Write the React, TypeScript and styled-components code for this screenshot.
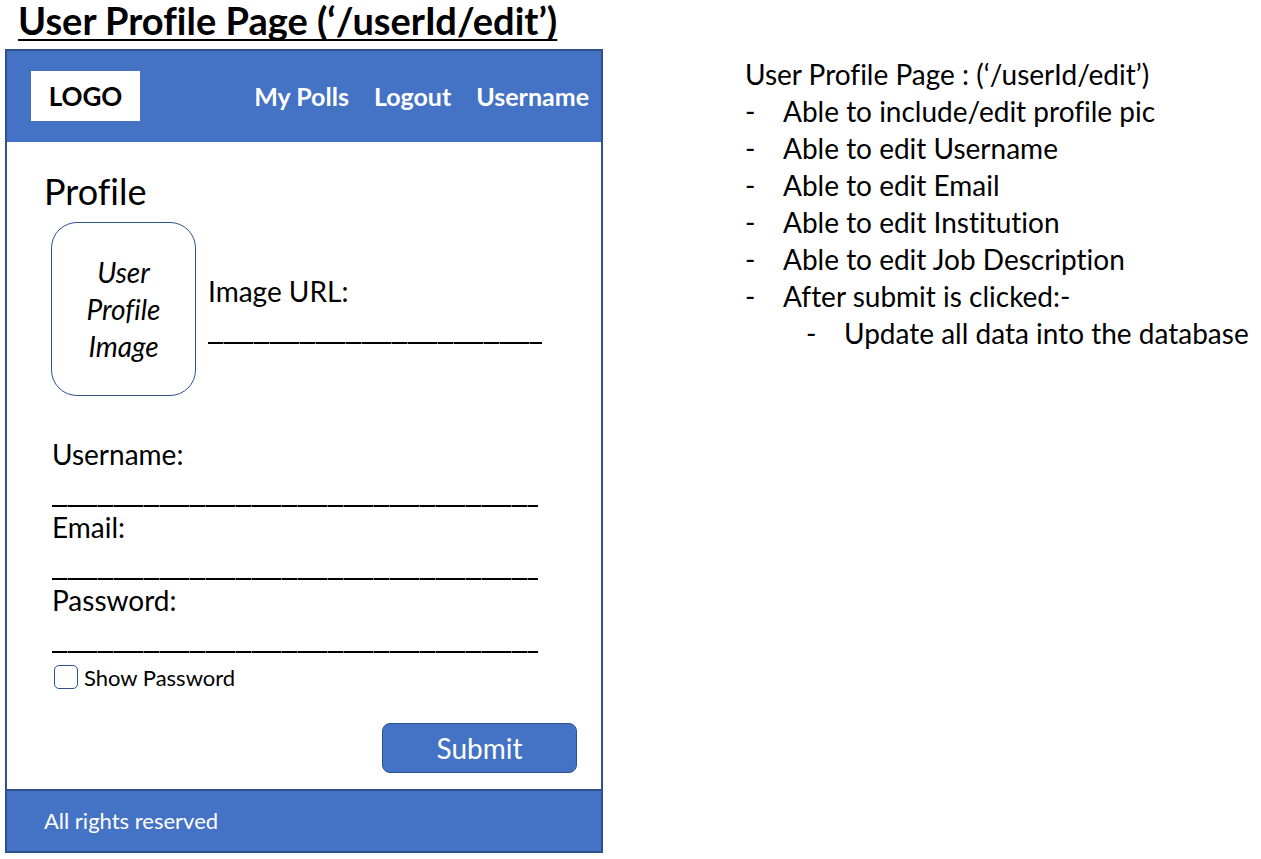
import React, { useState } from "react";
import styled, { createGlobalStyle } from "styled-components";

const blue = "#4472c4";
const navy = "#2f528f";

const GlobalStyle = createGlobalStyle`
  *, *::before, *::after { box-sizing: border-box; }
  body {
    margin: 0;
    background: #fff;
    color: #000;
    font-family: Lato, "Liberation Sans", sans-serif;
    font-size: 28px;
    line-height: 37px;
    font-variant-ligatures: none;
  }
  button, input { font: inherit; color: inherit; }
`;

const Page = styled.main`
  padding: 0 5px 6px;
`;

const Title = styled.h1`
  margin: 0;
  padding: 0 13px 9px;
  font-size: 38px;
  line-height: 40px;
  font-weight: 700;
  white-space: nowrap;
  text-decoration: underline 2px;
  text-decoration-skip-ink: none;
  text-underline-offset: 4px;
`;

const Columns = styled.div`
  display: grid;
  grid-template-columns: minmax(0, 598fr) minmax(0, 511fr);
  column-gap: 142px;
  align-items: start;
`;

const Screen = styled.section`
  border: 2px solid ${navy};
  background: #fff;
`;

const Header = styled.header`
  display: flex;
  align-items: center;
  justify-content: space-between;
  height: 91px;
  padding: 0 12px 2px 24px;
  background: ${blue};
`;

const Logo = styled.a`
  padding: 7px 0 6px;
  width: 109px;
  background: #fff;
  color: #000;
  font-size: 26px;
  font-weight: 700;
  text-align: center;
  text-decoration: none;
`;

const Nav = styled.nav`
  display: flex;
  gap: 25px;
  padding-top: 2px;
`;

const NavLink = styled.a`
  color: #fff;
  font-size: 25px;
  font-weight: 700;
  text-decoration: none;
  white-space: nowrap;
`;

const Form = styled.form`
  display: flex;
  flex-direction: column;
  padding: 28px 24px 16px 37px;
`;

const Heading = styled.h2`
  margin: 0 0 10px;
  font-size: 36px;
  line-height: 42px;
  font-weight: 400;
`;

const ImageRow = styled.div`
  display: flex;
  align-items: center;
  gap: 12px;
  margin: 0 35px 40px 7px;
`;

const ProfileImage = styled.div`
  display: flex;
  align-items: center;
  justify-content: center;
  flex: none;
  width: 145px;
  height: 174px;
  padding: 0 30px;
  border: 1px solid ${navy};
  border-radius: 26px;
  font-style: italic;
  text-align: center;
`;

const Field = styled.div`
  display: flex;
  flex-direction: column;
  flex: 1;
  min-width: 0;
`;

const Fields = styled.div`
  display: flex;
  flex-direction: column;
  margin: 0 39px 0 8px;
`;

const Input = styled.input`
  width: 100%;
  height: 34px;
  margin: 0 0 2px;
  padding: 0 2px;
  border: 0;
  outline: 0;
  background: repeating-linear-gradient(
      90deg,
      #000 0 15px,
      #777 15px 16px,
      #000 16px 45px,
      #777 45px 46px
    )
    left bottom / 100% 2px no-repeat;
`;

const CheckRow = styled.label`
  display: flex;
  align-items: center;
  gap: 6px;
  height: 24px;
  margin: 10px 0 34px 10px;
  font-size: 22px;
`;

const Checkbox = styled.input`
  appearance: none;
  width: 24px;
  height: 24px;
  margin: 0;
  border: 1px solid ${navy};
  border-radius: 5px;
  background: #fff;

  &:checked {
    background: ${blue};
  }
`;

const Submit = styled.button`
  align-self: flex-end;
  width: 195px;
  height: 50px;
  padding: 0;
  border: 1px solid ${navy};
  border-radius: 8px;
  background: ${blue};
  color: #fff;
`;

const Footer = styled.footer`
  padding: 11px 37px 12px;
  border-top: 2px solid ${navy};
  background: ${blue};
  color: #fff;
  font-size: 22px;
`;

const Notes = styled.section`
  padding-top: 7px;
  white-space: nowrap;
`;

const NotesTitle = styled.p`
  margin: 0;
`;

const NoteList = styled.ul<{ $nested?: boolean }>`
  margin: 0;
  padding: 0 0 0 ${(p) => (p.$nested ? 23 : 0)}px;
  list-style: none;
`;

const NoteItem = styled.li`
  display: grid;
  grid-template-columns: 38px 1fr;
`;

const fields = [
  { id: "username", label: "Username:", type: "text" },
  { id: "email", label: "Email:", type: "email" },
];

const notes = [
  "Able to include/edit profile pic",
  "Able to edit Username",
  "Able to edit Email",
  "Able to edit Institution",
  "Able to edit Job Description",
];

export default function App() {
  const [showPassword, setShowPassword] = useState(false);

  return (
    <Page>
      <GlobalStyle />
      <Title>User Profile Page (‘/userId/edit’)</Title>
      <Columns>
        <Screen>
          <Header>
            <Logo href="#">LOGO</Logo>
            <Nav>
              <NavLink href="#polls">My Polls</NavLink>
              <NavLink href="#logout">Logout</NavLink>
              <NavLink href="#profile">Username</NavLink>
            </Nav>
          </Header>
          <Form onSubmit={(e) => e.preventDefault()}>
            <Heading>Profile</Heading>
            <ImageRow>
              <ProfileImage>User Profile Image</ProfileImage>
              <Field>
                <label htmlFor="image-url">Image URL:</label>
                <Input id="image-url" type="url" />
              </Field>
            </ImageRow>
            <Fields>
              {fields.map((f) => (
                <Field key={f.id}>
                  <label htmlFor={f.id}>{f.label}</label>
                  <Input id={f.id} type={f.type} />
                </Field>
              ))}
              <Field>
                <label htmlFor="password">Password:</label>
                <Input id="password" type={showPassword ? "text" : "password"} />
              </Field>
            </Fields>
            <CheckRow>
              <Checkbox
                type="checkbox"
                checked={showPassword}
                onChange={(e) => setShowPassword(e.target.checked)}
              />
              Show Password
            </CheckRow>
            <Submit type="submit">Submit</Submit>
          </Form>
          <Footer>All rights reserved</Footer>
        </Screen>
        <Notes>
          <NotesTitle>User Profile Page : (‘/userId/edit’)</NotesTitle>
          <NoteList>
            {notes.map((note) => (
              <NoteItem key={note}>
                <span>-</span>
                <span>{note}</span>
              </NoteItem>
            ))}
            <NoteItem>
              <span>-</span>
              <div>
                After submit is clicked:-
                <NoteList $nested>
                  <NoteItem>
                    <span>-</span>
                    <span>Update all data into the database</span>
                  </NoteItem>
                </NoteList>
              </div>
            </NoteItem>
          </NoteList>
        </Notes>
      </Columns>
    </Page>
  );
}
